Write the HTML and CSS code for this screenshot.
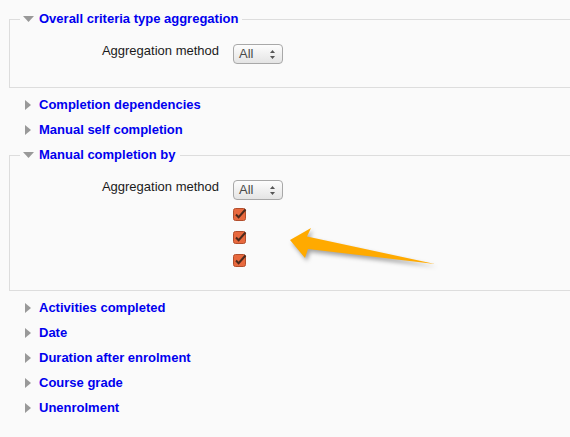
FILE: index.html
```html
<!DOCTYPE html>
<html lang="en">
<head>
  <meta charset="UTF-8" />
  <meta name="viewport" content="width=device-width, initial-scale=1.0" />
  <title>Course completion</title>
  <link rel="stylesheet" href="styles.css">
</head>
<body>
  <form class="settings">
    <fieldset>
      <legend><svg class="twisty" width="11" height="16"><polygon points="0,5 11,5 5.5,11" /></svg>Overall criteria type aggregation</legend>
      <div class="row">
        <label class="label">Aggregation method</label>
        <span class="select">All<svg class="spin" width="6" height="9"><polygon points="0,3 5,3 2.5,0" /><polygon points="0,6 5,6 2.5,9" /></svg></span>
      </div>
    </fieldset>

    <fieldset class="collapsed">
      <legend><svg class="twisty" width="11" height="16"><polygon points="2,3 8,8 2,13" /></svg>Completion dependencies</legend>
    </fieldset>
    <fieldset class="collapsed">
      <legend><svg class="twisty" width="11" height="16"><polygon points="2,3 8,8 2,13" /></svg>Manual self completion</legend>
    </fieldset>

    <fieldset>
      <legend><svg class="twisty" width="11" height="16"><polygon points="0,5 11,5 5.5,11" /></svg>Manual completion by</legend>
      <div class="row">
        <label class="label">Aggregation method</label>
        <span class="select">All<svg class="spin" width="6" height="9"><polygon points="0,3 5,3 2.5,0" /><polygon points="0,6 5,6 2.5,9" /></svg></span>
      </div>
      <div class="checks">
        <svg class="check" width="14" height="13" viewBox="0 0 14 13"><rect x="0.5" y="0.5" width="12" height="12" rx="2" /><path d="M3 6.5 L5.6 9.2 L12.5 1.5" /></svg>
        <svg class="check" width="14" height="13" viewBox="0 0 14 13"><rect x="0.5" y="0.5" width="12" height="12" rx="2" /><path d="M3 6.5 L5.6 9.2 L12.5 1.5" /></svg>
        <svg class="check" width="14" height="13" viewBox="0 0 14 13"><rect x="0.5" y="0.5" width="12" height="12" rx="2" /><path d="M3 6.5 L5.6 9.2 L12.5 1.5" /></svg>
      </div>
    </fieldset>

    <fieldset class="collapsed">
      <legend><svg class="twisty" width="11" height="16"><polygon points="2,3 8,8 2,13" /></svg>Activities completed</legend>
    </fieldset>
    <fieldset class="collapsed">
      <legend><svg class="twisty" width="11" height="16"><polygon points="2,3 8,8 2,13" /></svg>Date</legend>
    </fieldset>
    <fieldset class="collapsed">
      <legend><svg class="twisty" width="11" height="16"><polygon points="2,3 8,8 2,13" /></svg>Duration after enrolment</legend>
    </fieldset>
    <fieldset class="collapsed">
      <legend><svg class="twisty" width="11" height="16"><polygon points="2,3 8,8 2,13" /></svg>Course grade</legend>
    </fieldset>
    <fieldset class="collapsed">
      <legend><svg class="twisty" width="11" height="16"><polygon points="2,3 8,8 2,13" /></svg>Unenrolment</legend>
    </fieldset>
  </form>

  <svg class="pointer" width="170" height="55" viewBox="0 0 170 55">
    <polygon points="10,20 31,8 27,16.5 155,44 28,29 25,38" />
  </svg>
</body>
</html>
```

FILE: styles.css
```css
html, body {
  margin: 0;
  overflow: hidden;
  background-color: #fafafa;
}
body {
  font-family: "Liberation Sans", Arial, sans-serif;
  font-size: 13px;
  color: #1a1a1a;
}
.settings {
  padding-top: 11px;
}
/* the right edge of each box is cut off by the window */
fieldset {
  margin: 0 0 9px 9px;
  padding: 16px 10px 23px;
  border: 1px solid #dddddd;
  border-right-width: 0;
  min-width: 0;
}
fieldset.collapsed {
  border-color: transparent;
  border-bottom-width: 0;
  padding-top: 0;
  padding-bottom: 0;
}
legend {
  padding: 0 4px 0 3px;
  line-height: 16px;
  font-weight: bold;
  color: #0000ee;
}
.twisty {
  vertical-align: top;
  margin-right: 5px;
  fill: #999999;
}
.row {
  display: flex;
  align-items: flex-start;
}
.label {
  width: 199px;
  margin-right: 14px;
  text-align: right;
  line-height: 16px;
}
.select {
  box-sizing: border-box;
  margin-top: 1px;
  width: 50px;
  height: 20px;
  padding-left: 5px;
  display: flex;
  align-items: center;
  justify-content: space-between;
  border: 1px solid #a8a8a8;
  border-radius: 4px;
  background: linear-gradient(#fdfdfd, #e4e4e4);
  color: #4a4a4a;
  line-height: 18px;
}
.spin {
  margin-right: 6px;
  fill: #555555;
}
.checks {
  margin: 8px 0 0 213px;
  display: flex;
  flex-direction: column;
  gap: 10px;
}
.check {
  display: block;
}
.check rect {
  fill: #e8693e;
  stroke: #b24e2c;
}
.check path {
  fill: none;
  stroke: #4d2a1c;
  stroke-width: 2;
}
.pointer {
  position: absolute;
  left: 280px;
  top: 220px;
  fill: #ffaa00;
  filter: drop-shadow(2px 3px 2px rgba(0, 0, 0, 0.35));
}
```
